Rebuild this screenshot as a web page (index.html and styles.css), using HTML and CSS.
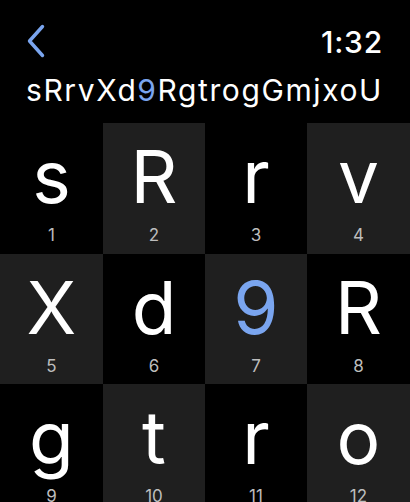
FILE: index.html
```html
<!DOCTYPE html>
<html>
<head>
<meta charset="utf-8">
<link rel="stylesheet" href="styles.css">
</head>
<body>
<div class="screen">
  <div class="header">
    <svg class="back" width="18" height="34" viewBox="0 0 18 34"><path d="M15.5 2.5 L2.5 17 L15.5 31.5" fill="none" stroke="#7aa5ef" stroke-width="3.4" stroke-linecap="round" stroke-linejoin="round"/></svg>
    <div class="time">1:32</div>
  </div>
  <div class="title">sRrvXd<span class="hl">9</span>RgtrogGmjxoU</div>
  <div class="grid">
    <div class="cell"><span class="ch">s</span><span class="num">1</span></div>
    <div class="cell dark"><span class="ch">R</span><span class="num">2</span></div>
    <div class="cell"><span class="ch">r</span><span class="num">3</span></div>
    <div class="cell dark"><span class="ch">v</span><span class="num">4</span></div>
    <div class="cell dark"><span class="ch">X</span><span class="num">5</span></div>
    <div class="cell"><span class="ch">d</span><span class="num">6</span></div>
    <div class="cell dark"><span class="ch hl">9</span><span class="num">7</span></div>
    <div class="cell"><span class="ch">R</span><span class="num">8</span></div>
    <div class="cell"><span class="ch">g</span><span class="num">9</span></div>
    <div class="cell dark"><span class="ch">t</span><span class="num">10</span></div>
    <div class="cell"><span class="ch">r</span><span class="num">11</span></div>
    <div class="cell dark"><span class="ch">o</span><span class="num">12</span></div>
  </div>
</div>
</body>
</html>
```
FILE: styles.css
```css
html, body {
  margin: 0;
  padding: 0;
  background: #000;
  overflow: hidden;
}
.screen {
  width: 410px;
  height: 502px;
  background: #000;
  color: #fff;
  font-family: "Inter", "Noto Sans", sans-serif;
  overflow: hidden;
}
.header {
  display: flex;
  justify-content: space-between;
  align-items: center;
  padding: 24px 27px 0 27px;
  height: 34px;
}
.back {
  display: block;
}
.time {
  font-size: 30px;
  font-weight: 500;
  letter-spacing: 0.8px;
  margin-top: 2px;
}
.title {
  font-size: 30px;
  font-weight: 400;
  padding: 14px 0 0 26px;
  height: 51px;
  line-height: 36px;
  letter-spacing: 1.6px;
  white-space: nowrap;
}
.hl {
  color: #7aa5ef;
}
.grid {
  display: grid;
  grid-template-columns: 103px 102px 102px 103px;
  grid-auto-rows: 130.5px;
}
.cell {
  display: flex;
  flex-direction: column;
  align-items: center;
}
.dark {
  background: #1f1f1f;
}
.ch {
  font-size: 73px;
  line-height: 72px;
  margin-top: 18px;
  height: 80px;
  font-weight: 400;
}
.num {
  font-size: 17px;
  line-height: 20px;
  color: #bdbdbd;
  margin-top: 4px;
}
```
